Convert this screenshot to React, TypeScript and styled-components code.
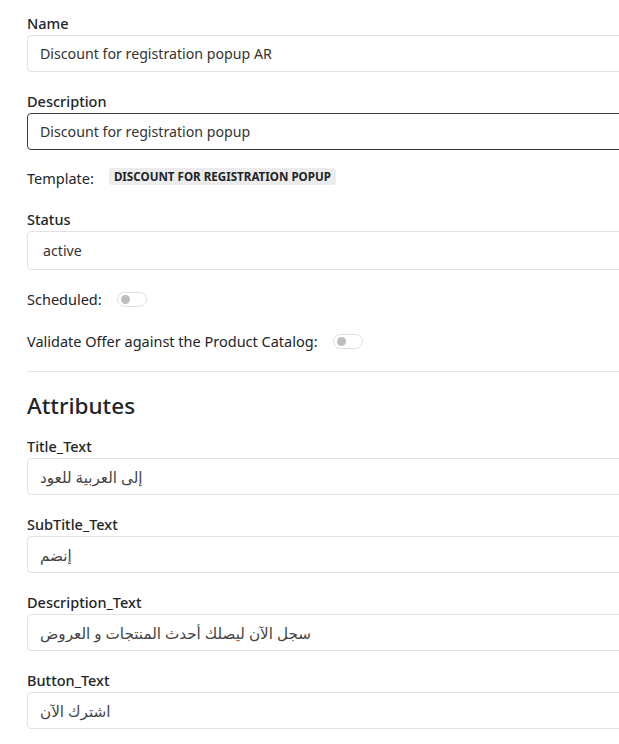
import React from 'react';
import styled, { createGlobalStyle } from 'styled-components';

const GlobalStyle = createGlobalStyle`
  html, body {
    margin: 0;
    padding: 0;
    background: #fff;
    overflow: hidden;
  }
  body {
    font-family: "Noto Sans", "DejaVu Sans", sans-serif;
    color: #212529;
  }
`;

const Page = styled.main`
  width: 720px;
  padding: 12px 0 0 27px;
  display: flex;
  flex-direction: column;
`;

const Field = styled.div<{ $mb?: number }>`
  display: flex;
  flex-direction: column;
  margin-bottom: ${(p) => (p.$mb ?? 18)}px;
`;

const Label = styled.label`
  font-size: 14.5px;
  font-weight: 500;
  line-height: 22px;
  margin-bottom: 1px;
  color: #212529;
`;

const Input = styled.div<{ $focused?: boolean; $pad?: number; $h?: number; $arabic?: boolean }>`
  height: ${(p) => p.$h ?? 37}px;
  box-sizing: border-box;
  display: flex;
  align-items: center;
  padding-left: ${(p) => p.$pad ?? 12}px;
  border: 1px solid ${(p) => (p.$focused ? '#3a3a3a' : '#e2e2e2')};
  border-radius: 4px;
  font-size: ${(p) => (p.$arabic ? 15.2 : 14.2)}px;
  color: ${(p) => (p.$arabic ? '#444' : '#333')};
  white-space: nowrap;
`;

const InlineRow = styled.div<{ $mb?: number }>`
  display: flex;
  align-items: center;
  height: 22px;
  gap: 15px;
  margin-bottom: ${(p) => p.$mb ?? 18}px;
  font-size: 14.5px;
  color: #212529;
`;

const Badge = styled.span`
  background: #ececec;
  border-radius: 3px;
  padding: 1px 5px;
  font-size: 11.6px;
  font-weight: 700;
  color: #212529;
  margin-top: -4px;
`;

const Toggle = styled.span`
  position: relative;
  width: 30px;
  height: 15px;
  box-sizing: border-box;
  border: 1px solid #dedede;
  border-radius: 8px;
  background: #fff;
  &::after {
    content: '';
    position: absolute;
    left: 3px;
    top: 2px;
    width: 9px;
    height: 9px;
    border-radius: 50%;
    background: #bdbdbd;
  }
`;

const Divider = styled.hr`
  border: none;
  border-top: 1px solid #e3e3e3;
  margin: 0 0 19px;
  width: 100%;
`;

const Heading = styled.h2`
  margin: 0 0 15px;
  font-size: 22.5px;
  font-weight: 500;
  line-height: 29px;
  color: #212529;
`;

const attributes = [
  { label: 'Title_Text', value: 'إلى العربية للعود' },
  { label: 'SubTitle_Text', value: 'إنضم' },
  { label: 'Description_Text', value: 'سجل الآن ليصلك أحدث المنتجات و العروض' },
  { label: 'Button_Text', value: 'اشترك الآن' },
];

const App: React.FC = () => {
  return (
    <Page>
      <GlobalStyle />
      <Field>
        <Label>Name</Label>
        <Input>Discount for registration popup AR</Input>
      </Field>
      <Field $mb={17}>
        <Label>Description</Label>
        <Input $focused>Discount for registration popup</Input>
      </Field>
      <InlineRow $mb={19}>
        <span>Template:</span>
        <Badge>DISCOUNT FOR REGISTRATION POPUP</Badge>
      </InlineRow>
      <Field>
        <Label>Status</Label>
        <Input $pad={15} $h={39}>active</Input>
      </Field>
      <InlineRow $mb={20}>
        <span>Scheduled:</span>
        <Toggle />
      </InlineRow>
      <InlineRow $mb={19}>
        <span>Validate Offer against the Product Catalog:</span>
        <Toggle />
      </InlineRow>
      <Divider />
      <Heading>Attributes</Heading>
      {attributes.map((a) => (
        <Field key={a.label}>
          <Label>{a.label}</Label>
          <Input $arabic>{a.value}</Input>
        </Field>
      ))}
    </Page>
  );
};

export default App;
